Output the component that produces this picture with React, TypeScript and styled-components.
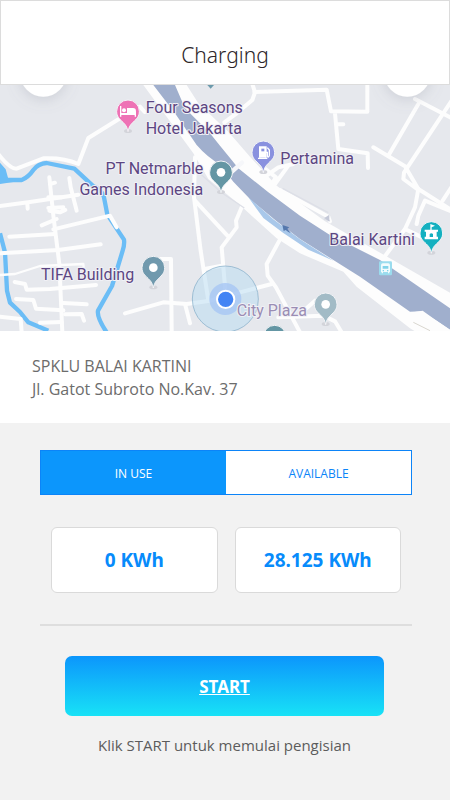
import React, { useState } from "react";
import styled, { createGlobalStyle } from "styled-components";

const GlobalStyle = createGlobalStyle`
  *, *::before, *::after { box-sizing: border-box; }
  body {
    margin: 0;
    background: #f2f2f2;
    color: #4a4a4a;
    font-family: "Noto Sans", "Open Sans", sans-serif;
  }
`;

const Header = styled.header`
  display: flex;
  justify-content: center;
  padding: 40px 16px 14px;
  background: #fff;
  border: 1px solid #dcdcdc;
`;

const Title = styled.h1`
  margin: 0;
  font-size: 21px;
  line-height: 29px;
  font-weight: 300;
  color: #2d2629;
`;

const MapCanvas = styled.svg`
  display: block;
  width: 100%;
  height: auto;
  background: #e6e8ed;
`;

const MapLabel = styled.text<{ $faded?: boolean }>`
  font-family: Roboto, sans-serif;
  font-size: 48px;
  fill: ${(p) => (p.$faded ? "#9a8db4" : "#5c4682")};
  stroke: #f1f1f6;
  stroke-width: 6px;
  stroke-linejoin: round;
  paint-order: stroke;
`;

const Station = styled.section`
  padding: 24px 32px 22px;
  background: #fff;
`;

const StationLine = styled.p`
  margin: 0;
  font-family: "Open Sans", sans-serif;
  font-size: 16px;
  line-height: 23px;
  font-weight: 400;
  color: #6c6c6c;
`;

const Panel = styled.main`
  padding: 27px 38px 32px 40px;
`;

const Tabs = styled.div`
  display: grid;
  grid-template-columns: 1fr 1fr;
  border: 1px solid #0c84f8;
`;

const Tab = styled.button<{ $active: boolean }>`
  height: 43px;
  padding: 2px 0 0;
  border: 0;
  background: ${(p) => (p.$active ? "#0c96fc" : "#fff")};
  color: ${(p) => (p.$active ? "#fff" : "#0c84f8")};
  font: 400 12px/16px "Open Sans", sans-serif;
  cursor: pointer;
`;

const Readings = styled.div`
  display: grid;
  grid-template-columns: 1fr 1fr;
  gap: 17px;
  padding: 32px 11px 31px;
  border-bottom: 2px solid #dedede;
`;

const Reading = styled.div`
  display: flex;
  align-items: center;
  justify-content: center;
  height: 66px;
  border: 1px solid #dadada;
  border-radius: 6px;
  background: #fff;
  color: #078bfb;
  font-size: 19px;
  line-height: 24px;
  font-weight: 700;
`;

const Actions = styled.div`
  display: flex;
  flex-direction: column;
  gap: 18px;
  padding: 30px 28px 0 25px;
`;

const StartButton = styled.button`
  height: 60px;
  padding: 2px 0 0;
  border: 0;
  border-radius: 7px;
  background: linear-gradient(#0c96fc, #18e2f6);
  color: #fff;
  font: 700 17px/24px "Noto Sans", sans-serif;
  text-decoration: underline;
  cursor: pointer;
`;

const Hint = styled.p`
  margin: 0;
  text-align: center;
  font-family: "Open Sans", sans-serif;
  font-size: 15px;
  line-height: 22px;
  font-weight: 400;
  color: #5c5c5c;
`;

type PinProps = { x: number; y: number; color: string; children?: React.ReactNode };

function Pin({ x, y, color, children }: PinProps) {
  return (
    <g transform={`translate(${x} ${y})`}>
      <ellipse cy="59" rx="12" ry="6" fill="#d3d4da" />
      <path
        d="M0 61C-3 45-8 40-15 33C-26 22-34 16-34 0A34 34 0 1 1 34 0C34 16 26 22 15 33C8 40 3 45 0 61Z"
        fill={color}
        stroke="#f3f4f7"
        strokeWidth="3"
      />
      {children ?? <circle r="13" fill="#fff" />}
    </g>
  );
}

function StationMap() {
  return (
    <MapCanvas viewBox="0 3 1350 738" role="img" aria-label="Map around Balai Kartini">
      <defs>
        <filter id="shade" x="-50%" y="-50%" width="200%" height="200%">
          <feDropShadow dx="0" dy="8" stdDeviation="20" floodColor="#7d8290" floodOpacity="0.25" />
        </filter>
      </defs>

      <g fill="none" stroke="#6bbdf6" strokeWidth="13" strokeLinejoin="round">
        <path d="M0 288L65 288Q85 280 100 258Q115 238 140 237L223 254L278 305Q308 318 312 340L322 392L372 467Q374 482 368 500L336 606L294 680Q290 700 320 745" />
        <path d="M0 448L15 505L21 620L30 656L60 684L85 715L145 740" />
      </g>
      <path d="M0 236L17 256L25 285L60 291L0 300Z" fill="#6bbdf6" />

      <g fill="none" stroke="#fdfdfd" strokeWidth="12" strokeLinecap="round" strokeLinejoin="round">
        <path d="M-5 210Q30 255 50 254L130 223Q190 220 235 240L265 162L352 108L420 68L434 84" />
        <path d="M0 366L90 354L235 332" />
        <path d="M148 280L160 395L178 540L187 745" />
        <path d="M208 282L212 310L230 380" />
        <path d="M82 358L83 374M145 340L185 340M150 300L165 296M145 372L190 370M148 380L180 385L196 378" />
        <path d="M125 424L170 405M160 436L330 395L350 430" />
        <path d="M28 458L165 450M0 508L175 498L302 481" />
        <path d="M0 573L45 570L120 546L250 540L252 560" strokeWidth="7" />
        <path d="M44 594L75 600L80 617L150 615L288 603" />
        <path d="M48 645L100 648L108 674L190 679M190 657L260 661M195 691L245 690L252 710M120 716L185 714M0 698L62 705L65 745" />
        <path d="M375 688L490 655L560 660L630 650L720 625L815 600" />
        <path d="M480 525L513 525L515 745M555 660L570 718" />
        <path d="M585 220L582 340L602 500L625 650" />
        <path d="M585 350L685 458M725 370L708 410L710 430L665 490L676 620" />
        <path d="M665 545L618 554M838 470L800 540L803 575L828 610L900 745M835 700L970 695L1005 712L1025 745M900 690L945 650" />
        <path d="M758 3L765 25L757 48L710 88L673 115" />
        <path d="M763 24L980 17L993 82L1102 83V3M1005 88L1015 195L1103 208L1104 252M1015 121L1030 121" />
        <path d="M1120 190L1215 247L1255 315L1370 388M1165 215L1255 60M1245 45L1360 105M1360 42L1212 266L1210 285L1255 318M1328 350L1370 285" />
        <path d="M1255 315L1245 370L1215 435L1145 530M1250 420L1255 395L1275 350L1360 385M1215 435L1262 458" />
        <path d="M785 285L835 250L880 240M825 300L865 245M790 250L828 280L810 308M840 318L985 398L990 412" />
      </g>

      <path
        d="M430 3L500 98L580 208L625 285L720 363L780 418L830 463L900 508L1030 563L1070 608L1230 733L1250 745H1360V632L1135 503L975 412L830 305L750 218L685 143L595 58L560 3Z"
        fill="#fdfdfd"
      />
      <path
        d="M460 3L525 88L590 183Q620 218 662 243L700 293L755 350L830 412L900 465L1000 528L1080 578L1230 683L1262 682L1310 710L1350 737V673L1140 528L985 450L900 395L805 325L715 253L695 228L660 185L630 148L555 73L525 3Z"
        fill="#a0afcd"
      />
      <path d="M745 340L820 406L900 466L1000 530L925 497L850 447L790 402Z" fill="#a9c8ea" />
      <path d="M847 423L868 430L862 434L872 447L865 444L857 438L851 441Z" fill="#5578ad" />
      <path d="M690 268L726 236" stroke="#f6f7fa" strokeWidth="13" strokeLinecap="round" />
      <path d="M1230 686L1268 680L1310 710L1350 737V745H1295L1245 714Z" fill="#fdfdfd" />
      <path d="M1240 715L1290 740" stroke="#d9d6cf" strokeWidth="3" />
      <path d="M602 270L662 324L733 372M848 313L985 386M972 405L990 410" fill="none" stroke="#dddfe7" strokeWidth="4" />
      <path d="M973 402L988 392V413Z" fill="#c5c9d8" />

      <g fill="#fff" filter="url(#shade)">
        <circle cx="130" cy="-32" r="70" />
        <circle cx="1222" cy="-32" r="70" />
      </g>
      <path d="M622 3H642L632 14Z" fill="#6c9aac" />

      <g>
        <rect x="1137" y="532" width="39" height="42" rx="4" fill="#9bdcee" />
        <path d="M1148 538H1165Q1170 538 1170 544V564H1143V544Q1143 538 1148 538Z" fill="#f2fbfd" />
        <path d="M1148 546H1165V554H1148ZM1148 558H1152V562H1148ZM1161 558H1165V562H1161Z" fill="#82d3e9" />
        <path d="M1147 563V568M1166 563V568" stroke="#f2fbfd" strokeWidth="4" />
      </g>

      <Pin x={384} y={82} color="#ee72b5">
        <g fill="#fff">
          <path d="M-24-16H-20V5H24V16H20V11H-20V16H-24Z" />
          <circle cx="-12" cy="-3" r="6" />
          <path d="M-3-10H15Q24-10 24 0V7H-3Z" />
        </g>
      </Pin>
      <Pin x={790} y={205} color="#8991df">
        <g fill="none" stroke="#fff" strokeWidth="4">
          <path d="M-11 16V-16H8V16" fill="#fff" />
          <path d="M-16 18H12M8 0H12V12Q16 17 18 9V-7L12-14" />
          <path d="M-6-11H3V-3H-6Z" fill="#8991df" stroke="none" />
        </g>
      </Pin>
      <Pin x={663} y={265} color="#6496a4" />
      <Pin x={460} y={551} color="#7099ad" />
      <Pin x={977} y={661} color="#a2bbc6" />
      <Pin x={824} y={758} color="#6496a4" />
      <Pin x={1294} y={447} color="#14b0c0">
        <path d="M-20 19V11H-16V-4H-20V-10H-3V-27L11-22L1-17V-10H20V-4H16V11H20V19ZM-5 12H5V3Q0-2-5 3Z" fill="#fff" fillRule="evenodd" />
      </Pin>

      <MapLabel x="437" y="88">Four Seasons</MapLabel>
      <MapLabel x="437" y="149">Hotel Jakarta</MapLabel>
      <MapLabel x="610" y="271" textAnchor="end">PT Netmarble</MapLabel>
      <MapLabel x="610" y="332" textAnchor="end">Games Indonesia</MapLabel>
      <MapLabel x="841" y="241">Pertamina</MapLabel>
      <MapLabel x="988" y="483">Balai Kartini</MapLabel>
      <MapLabel x="123" y="588">TIFA Building</MapLabel>

      <circle cx="676" cy="645" r="99" fill="#b8dcf2" fillOpacity="0.5" stroke="#7da9c6" strokeWidth="2" />
      <circle cx="676" cy="645" r="48" fill="#a4c4f4" fillOpacity="0.75" />
      <circle cx="677" cy="646" r="26" fill="#4384f4" stroke="#fff" strokeWidth="6" />
      <MapLabel x="710" y="697" $faded>City Plaza</MapLabel>
    </MapCanvas>
  );
}

export default function App() {
  const [tab, setTab] = useState<"use" | "available">("use");

  return (
    <>
      <GlobalStyle />
      <Header>
        <Title>Charging</Title>
      </Header>
      <StationMap />
      <Station>
        <StationLine>SPKLU BALAI KARTINI</StationLine>
        <StationLine>Jl. Gatot Subroto No.Kav. 37</StationLine>
      </Station>
      <Panel>
        <Tabs role="tablist">
          <Tab type="button" role="tab" aria-selected={tab === "use"} $active={tab === "use"} onClick={() => setTab("use")}>
            IN USE
          </Tab>
          <Tab type="button" role="tab" aria-selected={tab === "available"} $active={tab === "available"} onClick={() => setTab("available")}>
            AVAILABLE
          </Tab>
        </Tabs>
        <Readings>
          <Reading>0 KWh</Reading>
          <Reading>28.125 KWh</Reading>
        </Readings>
        <Actions>
          <StartButton type="button">START</StartButton>
          <Hint>Klik START untuk memulai pengisian</Hint>
        </Actions>
      </Panel>
    </>
  );
}
